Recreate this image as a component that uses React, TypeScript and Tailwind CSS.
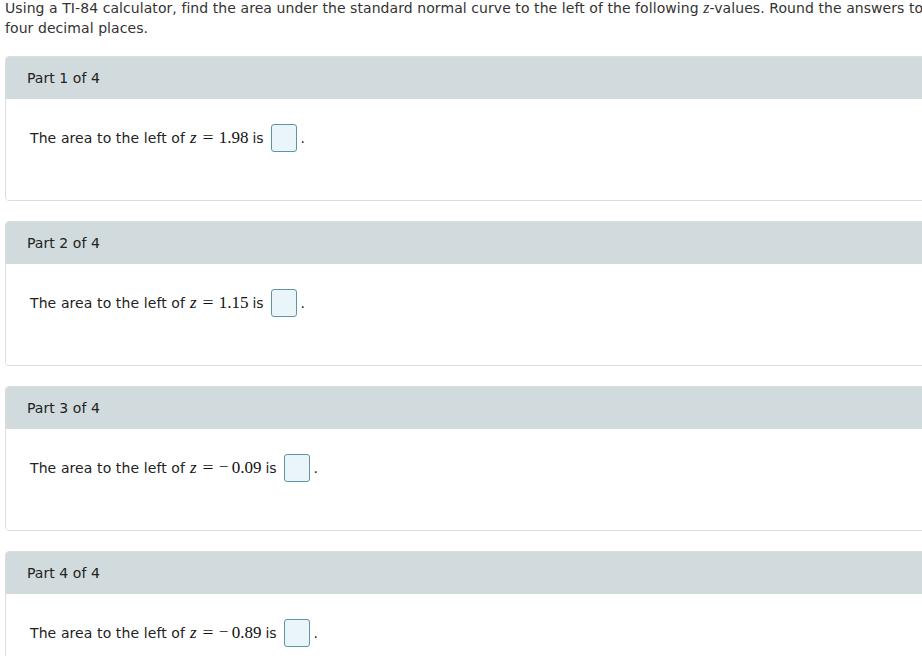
import React from "react";

const parts = [
  { n: 1, z: "1.98", neg: false },
  { n: 2, z: "1.15", neg: false },
  { n: 3, z: "0.09", neg: true },
  { n: 4, z: "0.89", neg: true },
];

const serif = { fontFamily: "'Liberation Serif', 'DejaVu Serif', serif" };

export default function App() {
  return (
    <div
      className="w-[922px] h-[656px] overflow-hidden bg-white text-[#333333]"
      style={{ fontFamily: "Verdana, 'DejaVu Sans', sans-serif" }}
    >
      <div className="w-[1000px] pl-[5px]">
        <p className="text-[14px] leading-[20px] whitespace-nowrap -mt-[2px] tracking-[0.07px]">
          Using a TI-84 calculator, find the area under the standard normal curve to the left of the following{" "}
          <span style={serif} className="italic text-[16px]">z</span>-values. Round the answers to
          <br />
          four decimal places.
        </p>
        <div className="mt-[18px] flex flex-col gap-[20px]">
          {parts.map((p) => (
            <div
              key={p.n}
              className="h-[145px] rounded-l-[4px] border border-[#d9dddf] overflow-hidden flex flex-col"
            >
              <div className="h-[42px] bg-[#d1dadd] flex items-center pl-[21px] text-[14px] text-[#222] tracking-[0.05px]">
                Part {p.n} of 4
              </div>
              <div className="flex-1 bg-white pl-[24px] pt-[25px]">
                <div className="flex items-center h-[28px] text-[14px] text-[#222]">
                  <span className="tracking-[0.1px]">The area to the left of</span>
                  <span className="ml-[5px] flex items-baseline text-[17px] text-[#111]" style={serif}>
                    <span className="italic">z</span>
                    <span className="ml-[5px] mr-[5px] inline-block w-[12px] text-center scale-x-[1.15]">=</span>
                    {p.neg ? (
                      <span className="mr-[3px] inline-block w-[10px] text-center relative -top-[1px]">−</span>
                    ) : null}
                    <span>{p.z}</span>
                  </span>
                  <span className="ml-[4px]">is</span>
                  <span className="ml-[7px] inline-block w-[26px] h-[28px] rounded-[3px] border border-[#5d97a5] bg-[#eaf5f9]"></span>
                  <span className="ml-[4px]">.</span>
                </div>
              </div>
            </div>
          ))}
        </div>
      </div>
    </div>
  );
}
